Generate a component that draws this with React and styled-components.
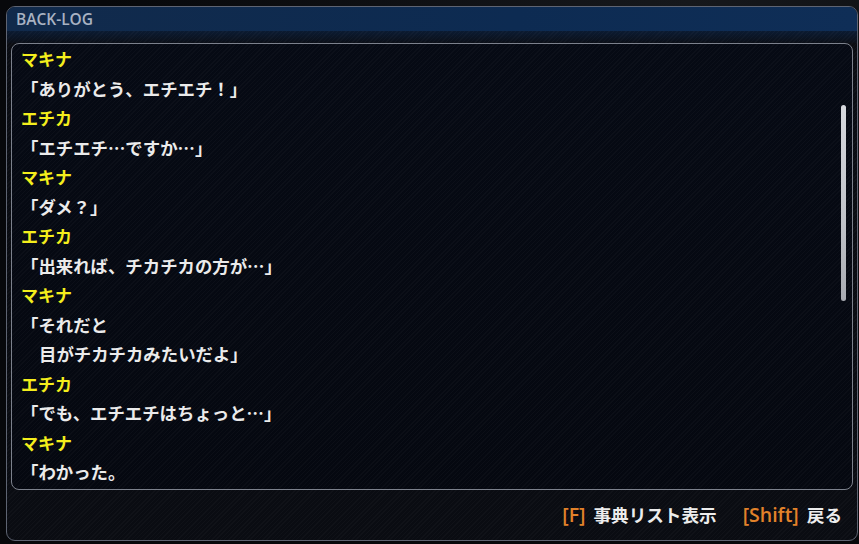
import { styled, createGlobalStyle } from 'styled-components';

const GlobalStyle = createGlobalStyle`
  html, body {
    margin: 0;
    padding: 0;
    background: #07080b;
  }
  body {
    font-family: "Noto Sans CJK JP", "Noto Sans", sans-serif;
  }
`;

const log = [
  { name: 'マキナ', lines: ['「ありがとう、エチエチ！」'] },
  { name: 'エチカ', lines: ['「エチエチ…ですか…」'] },
  { name: 'マキナ', lines: ['「ダメ？」'] },
  { name: 'エチカ', lines: ['「出来れば、チカチカの方が…」'] },
  { name: 'マキナ', lines: ['「それだと', '目がチカチカみたいだよ」'] },
  { name: 'エチカ', lines: ['「でも、エチエチはちょっと…」'] },
  { name: 'マキナ', lines: ['「わかった。'] },
];

export default function App() {
  return (
    <>
      <GlobalStyle />
      <StScreen>
        <StWindow>
          <StTitleBar>BACK-LOG</StTitleBar>
          <StStripeBand />
          <StLogPanel>
            {log.map((entry, i) => (
              <StEntry key={i}>
                <StName>{entry.name}</StName>
                {entry.lines.map((line, j) => (
                  <StLine key={j} $indent={j > 0}>
                    {line}
                  </StLine>
                ))}
              </StEntry>
            ))}
            <StScrollThumb />
          </StLogPanel>
          <StFooter>
            <StHint>
              <StKey>[F]</StKey>事典リスト表示
            </StHint>
            <StHint>
              <StKey>[Shift]</StKey>戻る
            </StHint>
          </StFooter>
        </StWindow>
      </StScreen>
    </>
  );
}

const stripes = `repeating-linear-gradient(
  -45deg,
  rgba(255, 255, 255, 0.022) 0px,
  rgba(255, 255, 255, 0.022) 1px,
  rgba(0, 0, 0, 0) 1px,
  rgba(0, 0, 0, 0) 3px
)`;

const StScreen = styled.div`
  box-sizing: border-box;
  width: 859px;
  height: 544px;
  padding: 6px 1px 3px 6px;
  background: radial-gradient(ellipse at 80% 0%, #16181c 0%, #07080b 60%);
`;

const StWindow = styled.div`
  box-sizing: border-box;
  width: 852px;
  height: 535px;
  display: flex;
  flex-direction: column;
  border: 1px solid #5e6472;
  border-radius: 9px;
  overflow: hidden;
  background: ${stripes}, #0a0c12;
`;

const StTitleBar = styled.div`
  height: 24px;
  flex-shrink: 0;
  padding-left: 9px;
  display: flex;
  align-items: center;
  font-family: "Open Sans", "Noto Sans", sans-serif;
  font-weight: 600;
  font-size: 15.5px;
  color: #a8b2c2;
  background: linear-gradient(90deg, #112a4b 0%, #0d2b52 60%, #0f2e57 100%);
`;

const StStripeBand = styled.div`
  height: 12px;
  flex-shrink: 0;
  background: ${stripes}, linear-gradient(180deg, #0b1b32 0%, #0b0f18 100%);
`;

const StLogPanel = styled.div`
  position: relative;
  box-sizing: border-box;
  height: 447px;
  margin: 0 4px 0 4px;
  padding: 0 0 0 9px;
  flex-shrink: 0;
  border: 1px solid #7c818c;
  border-radius: 8px;
  overflow: hidden;
  background: ${stripes}, linear-gradient(180deg, #060a14 0%, #050810 100%);
`;

const StEntry = styled.div`
  display: flex;
  flex-direction: column;
`;

const StName = styled.div`
  height: 29.5px;
  line-height: 29.5px;
  font-size: 17px;
  font-weight: 700;
  color: #f4ee1c;
`;

const StLine = styled.div`
  height: 29.5px;
  line-height: 29.5px;
  font-size: 17.4px;
  font-weight: 700;
  color: #ebebeb;
  white-space: pre;
  padding-left: ${({ $indent }) => ($indent ? '18px' : '0')};
`;

const StScrollThumb = styled.div`
  position: absolute;
  top: 61px;
  right: 6px;
  width: 5px;
  height: 196px;
  border-radius: 3px;
  background: linear-gradient(180deg, #d6d8de 0%, #bfc2c8 60%, #a8abb2 100%);
`;

const StFooter = styled.div`
  flex: 1;
  display: flex;
  justify-content: flex-end;
  align-items: center;
  gap: 26px;
  padding: 0 15px 2px 0;
`;

const StHint = styled.div`
  display: flex;
  align-items: center;
  gap: 8px;
  font-size: 17.6px;
  font-weight: 700;
  color: #ececec;
`;

const StKey = styled.span`
  font-family: "Open Sans", "Noto Sans", sans-serif;
  font-weight: 600;
  font-size: 19.5px;
  color: #e2822a;
`;
